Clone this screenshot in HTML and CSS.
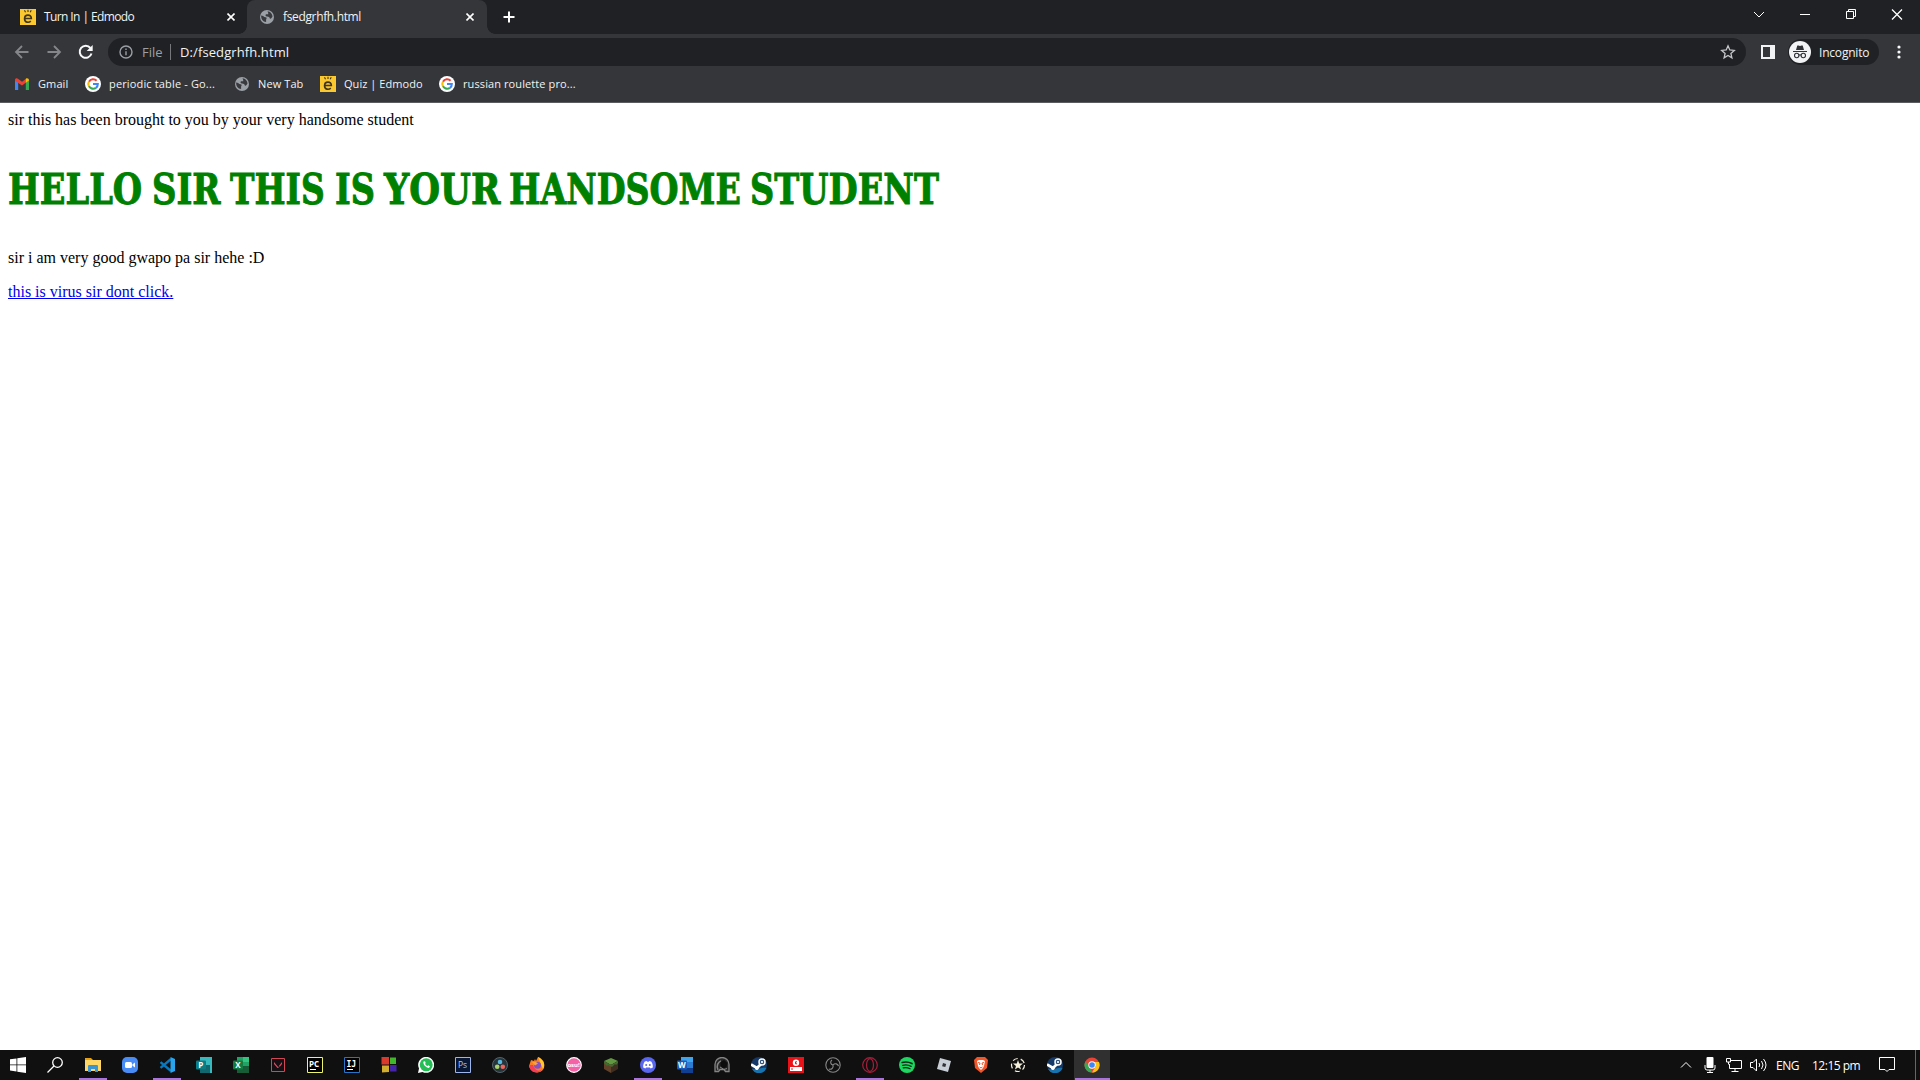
FILE: index.html
```html
<!DOCTYPE html>
<html lang="en">
<head>
<meta charset="utf-8">
<title>fsedgrhfh.html</title>
<link rel="stylesheet" href="styles.css">
</head>
<body>
<svg class="defs" aria-hidden="true">
  <symbol id="edmodo" viewBox="0 0 16 16"><path fill="#fbc82f" d="M0 0h16v16H0z"/><path d="M4.800 9.500h6.500c.2-4.500-6.700-4.700-6.700.2 0 4.100 4.200 4.200 6.200 2.500" fill="none" stroke="#40361d" stroke-width="1.700"/><path d="M4.500 1.200l1 2M8 .8v2.300M11.200 1.200l-1 2" stroke="#40361d" stroke-width="1.100"/></symbol>
  <symbol id="globe" viewBox="0 0 16 16"><circle cx="8" cy="8" r="7" fill="#9aa0a6"/><path d="M2.200 6.500c2 .1 2.600 1.600 4.300 1.700 1.500 0 1.300 1.400.6 2.200v2.700C4 12.800 1.800 9.800 2.200 6.500zM8.500 2.300c2.800.2 4.800 2.600 5 5.200-.7.800-1.300 2.600-2.500 2.200-.5-1.500-1.200-2-3-2.100C6.500 7.200 6 6 7 5.200h2.200V3.800z" fill="#393a3e"/></symbol>
  <symbol id="google" viewBox="0 0 16 16"><circle cx="8" cy="8" r="8" fill="#fff"/><g fill="none" stroke-width="2.100"><path d="M4 5.700A4.800 4.800 0 0 1 11.600 4.700" stroke="#ea4335"/><path d="M4 5.500a4.800 4.800 0 0 0 0 5" stroke="#fbbc05"/><path d="M4 10.300a4.800 4.800 0 0 0 7 1.500" stroke="#34a853"/><path d="M8 8h4.800c0 1.500-.6 2.900-1.800 3.800" stroke="#4285f4"/></g></symbol>
  <symbol id="steam" viewBox="0 0 16 16"><circle cx="8" cy="8" r="8" fill="#153a69"/><path d="M1 12a8 8 0 0 0 14.500-1c-4-1-8 2-14.500 1" fill="#1773ad"/><path d="M0 7.500l6 3.500 5-5" fill="none" stroke="#fff" stroke-width="2.800"/><circle cx="11" cy="5" r="3" fill="#153a69" stroke="#fff" stroke-width="1.500"/><circle cx="11" cy="5" r="1.300" fill="#dfe9f2"/><circle cx="5.800" cy="11.300" r="1.800" fill="#fff"/></symbol>
</svg>

<header class="browser">
  <div class="tabstrip">
    <div class="tab">
      <svg class="ico"><use href="#edmodo"/></svg><span class="tab-title t-turn">Turn In | Edmodo</span>
      <svg class="close" viewBox="0 0 8 8"><path d="M.5.500l7 7m0-7l-7 7"/></svg>
    </div>
    <div class="tab active">
      <svg class="ico"><use href="#globe"/></svg><span class="tab-title t-file">fsedgrhfh.html</span>
      <svg class="close" viewBox="0 0 8 8"><path d="M.5.500l7 7m0-7l-7 7"/></svg>
    </div>
    <svg class="plus" viewBox="0 0 12 12"><path d="M6 .5v11M.5 6h11"/></svg>
    <div class="window-controls">
      <svg viewBox="0 0 46 28"><path d="M18 12l5 5 5-5"/></svg>
      <svg viewBox="0 0 46 28"><path d="M18 14.500h10"/></svg>
      <svg viewBox="0 0 46 28"><path d="M18.500 11.500h7v7h-7zM20.500 11v-1.500h7v7H26"/></svg>
      <svg viewBox="0 0 46 28"><path d="M18 9.500l10 10m0-10l-10 10" class="x"/></svg>
    </div>
  </div>

  <div class="toolbar">
    <svg class="nav dim" viewBox="0 0 16 16"><path d="M14.500 8H2m6-6L2 8l6 6"/></svg>
    <svg class="nav dim" viewBox="0 0 16 16"><path d="M1.500 8H14M8 2l6 6-6 6"/></svg>
    <svg class="nav" viewBox="0 0 16 16"><path d="M13.500 9.500A6 6 0 1 1 12.400 4"/><path d="M14.700 1v6h-6z" class="solid"/></svg>
    <div class="omnibox">
      <svg class="info" viewBox="0 0 14 14"><circle cx="7" cy="7" r="6"/><path d="M7 6.300v4M7 3.500v1.600"/></svg>
      <span class="scheme">File</span><span class="url">D:/fsedgrhfh.html</span>
      <svg class="star" viewBox="0 0 16 16"><path d="M8 1.800l1.800 4.200 4.500.4-3.400 3 1 4.500L8 11.500l-3.900 2.400 1-4.500-3.400-3 4.500-.4z"/></svg>
    </div>
    <svg class="panel" viewBox="0 0 14 14"><path fill="#f1f3f4" d="M0 0h14v14H0z"/><path fill="#35363a" d="M2 2h7v10H2z"/></svg>
    <div class="profile">
      <svg viewBox="0 0 22 22"><circle cx="11" cy="11" r="11" fill="#f1f3f4"/><path fill="#303136" d="M7 9l1.300-4.500h1.200l1.500.5 1.500-.5h1.200L15 9zM4 10h14v1H4z"/><g fill="none" stroke="#303136" stroke-width="1.100"><circle cx="7.700" cy="14.500" r="2.200"/><circle cx="14.300" cy="14.500" r="2.200"/><path d="M9.800 14.200q1.200-.8 2.400 0"/></g></svg>
      <span>Incognito</span>
    </div>
    <svg class="dots" viewBox="0 0 4 14"><circle cx="2" cy="2" r="1.600"/><circle cx="2" cy="7" r="1.600"/><circle cx="2" cy="12" r="1.600"/></svg>
  </div>

  <nav class="bookmarks">
    <a class="bm b1"><svg class="ico" viewBox="0 0 16 16"><path fill="#4285f4" d="M1 4l3.200 2v8H1z"/><path fill="#34a853" d="M11.800 6L15 4v10h-3.200z"/><path fill="#ea4335" d="M1 4c0-2 2-2.200 3-1.300l4 3 4-3v3.800L8 9.500 1 4.700z"/><path fill="#fbbc04" d="M11.800 2.800c1.200-1 3.200-.4 3.200 1.700l-3.200 2.300z"/></svg><span>Gmail</span></a>
    <a class="bm b2"><svg class="ico"><use href="#google"/></svg><span>periodic table - Go...</span></a>
    <a class="bm b3"><svg class="ico"><use href="#globe"/></svg><span>New Tab</span></a>
    <a class="bm b4"><svg class="ico"><use href="#edmodo"/></svg><span>Quiz | Edmodo</span></a>
    <a class="bm b5"><svg class="ico"><use href="#google"/></svg><span>russian roulette pro...</span></a>
  </nav>
</header>

<main class="page">
  <p class="first">sir this has been brought to you by your very handsome student</p>
  <h1><span class="w1">HELLO</span> <span class="w2">SIR</span> <span class="w3">THIS</span> <span class="w4">IS</span> <span class="w5">YOUR</span> <span class="w6">HANDSOME</span> <span class="w7">STUDENT</span></h1>
  <p>sir i am very good gwapo pa sir hehe :D</p>
  <p><a class="link" href="#">this is virus sir dont click.</a></p>
</main>

<footer class="taskbar">
  <div class="apps">
    <i><svg viewBox="0 0 16 16"><path fill="#fff" d="M0 2.300l6.500-.9v6.100H0zM7.300 1.300L16 0v7.500H7.300zM0 8.300h6.500v6.100L0 13.600zM7.300 8.300H16V16l-8.700-1.300z"/></svg></i>
    <i><svg viewBox="0 0 16 16"><g fill="none" stroke="#fff" stroke-width="1.300"><circle cx="10.500" cy="5.500" r="4.800"/><path d="M7 9L.5 15.500"/></g></svg></i>
    <i class="open"><svg viewBox="0 0 16 16"><path fill="#e8a012" d="M0 1h6l2 2h-8z"/><path fill="#ffd767" d="M0 3h16v11H0z"/><path fill="#3c94d1" d="M3 15V9q0-1 1-1h8q1 0 1 1v6h-3v-3H6v3z"/></svg></i>
    <i><svg viewBox="0 0 16 16"><rect width="16" height="16" rx="5" fill="#4a8cf5"/><rect x="3" y="5" width="7" height="6" rx="1.500" fill="#fff"/><path fill="#fff" d="M10.500 7.200L13 5.500v5l-2.500-1.700z"/></svg></i>
    <i class="open"><svg viewBox="0 0 16 16"><path d="M12 2L1.500 10.800M1.500 5.200L12 14" stroke="#0879be" stroke-width="2.400"/><path fill="#29a5ee" d="M11.500 0L16 2v12l-4.500 2z"/></svg></i>
    <i><svg viewBox="0 0 16 16"><path fill="#37b9bd" d="M4 0h12v16H4z"/><path fill="#12676e" d="M4 8h10v8H4z"/><rect y="3.500" width="10" height="9" rx="1" fill="#0b7d83"/><text x="2.200" y="11" class="glyph">P</text></svg></i>
    <i><svg viewBox="0 0 16 16"><path fill="#21a366" d="M4 0h12v16H4z"/><path fill="#33c481" d="M10 0h6v5h-6z"/><path fill="#185c37" d="M4 9h12v7H4z"/><rect y="3.500" width="10" height="9" rx="1" fill="#107c41"/><text x="2.200" y="11" class="glyph">X</text></svg></i>
    <i><svg viewBox="0 0 16 16"><path d="M1.500 1.500h13v13h-13z" fill="#151013" stroke="#d24757"/><path d="M4 5v2l3.500 4h1.500zM12 5v2l-2 2.500H8.500z" fill="#e54b5e"/></svg></i>
    <i><svg viewBox="0 0 16 16"><path d="M.5.500h15v15H.5z" fill="#000" stroke="#edf36b"/><text x="2" y="9.500" class="glyph jb">PC</text><path d="M3 12.500h6" stroke="#fff"/></svg></i>
    <i><svg viewBox="0 0 16 16"><path d="M.5.500h15v15H.5z" fill="#000" stroke="#2875c7"/><text x="2.500" y="9.500" class="glyph ij">IJ</text><path d="M3 12.500h6" stroke="#fff"/></svg></i>
    <i><svg viewBox="0 0 16 16"><path fill="#d93a2b" d="M.5 0H8v7.500H.5z"/><path fill="#41b72d" d="M9 .5h6V7H9z"/><path fill="#d2ae30" d="M1 8.500h7V15l-7 .5z"/><path fill="#4424a9" d="M9 8h6.500v6.500H9z"/></svg></i>
    <i><svg viewBox="0 0 16 16"><path fill="#fff" d="M0 16l1-4.500A8 8 0 1 1 4.500 15z"/><circle cx="8.200" cy="7.800" r="6.500" fill="#25bd55"/><path d="M5.500 4.500c-1 2.500 2.500 6.500 5.500 6.500l1-1.700-1.800-1-1 .9L7 7l.7-1-.7-1.700z" fill="#fff"/></svg></i>
    <i><svg viewBox="0 0 16 16"><path d="M.5.500h15v15H.5z" fill="#071735" stroke="#9eb5ec"/><text x="3" y="11" class="glyph ps">Ps</text></svg></i>
    <i><svg viewBox="0 0 16 16"><circle cx="8" cy="8" r="7.500" fill="#26343c" stroke="#56646b"/><circle cx="8" cy="5" r="2.300" fill="#57b9df"/><circle cx="5.200" cy="9.800" r="2.300" fill="#a9d46b"/><circle cx="10.800" cy="9.800" r="2.300" fill="#ef665c"/></svg></i>
    <i><svg viewBox="0 0 16 16"><path fill="#ff7b24" d="M2 3l3 1 1-2 1 2 2-4 5 4c6 12-11 16-14 5z"/><path fill="#ffc72b" d="M9 0c5 2 8 7 5 12L11 5z"/><path fill="#f43e55" d="M0 8c1 8 9 10 14 4-4 3-8 2-10-4z"/><circle cx="8.500" cy="8.200" r="3.500" fill="#8551c7"/><path fill="#ffa12b" d="M3 5h4l2 1.500-3 2z"/></svg></i>
    <i><svg viewBox="0 0 16 16"><circle cx="8" cy="8" r="7.300" fill="#f463a5" stroke="#fff" stroke-width="1.200"/><text x="1.400" y="10.200" class="glyph osu">osu!</text></svg></i>
    <i><svg viewBox="0 0 16 16"><path fill="#639843" d="M1 4l7-3 7 3-7 4z"/><path fill="#624329" d="M1 4l7 4v8l-7-4z"/><path fill="#3f2d20" d="M15 4L8 8v8l7-4z"/><path fill="#416b2f" d="M1 4l7 4 7-4v2l-2 2-1-1-3 3-2-1-2-1-1 1-3-3z"/></svg></i>
    <i class="open"><svg viewBox="0 0 16 16"><circle cx="8" cy="8" r="8" fill="#5966ee"/><path fill="#fff" d="M4.800 4.600l2-.6.5.8h1.400l.5-.8 2 .6c1.200 1.800 1.800 3.600 1.600 5.800l-2.100 1.100-.8-1.100H6.100l-.8 1.100-2.100-1.100c-.2-2.200.4-4 1.600-5.800z"/><circle cx="6.200" cy="8" r="1" fill="#5966ee"/><circle cx="9.800" cy="8" r="1" fill="#5966ee"/></svg></i>
    <i><svg viewBox="0 0 16 16"><path fill="#41a5ee" d="M4 0h12v5H4z"/><path fill="#2b7cd3" d="M4 5h12v6H4z"/><path fill="#103f91" d="M4 11h12v5H4z"/><rect y="3.500" width="10" height="9" rx="1" fill="#185abd"/><text x="1" y="11" class="glyph">W</text></svg></i>
    <i><svg viewBox="0 0 16 16"><path d="M1 14.500V7.500a7 7 0 0 1 14 0v7h-3.500l-1.500-2H6l-1.500 2z" fill="#252525" stroke="#858585" stroke-width="1.300"/><path d="M4 13c-2-4 0-8 3-9" fill="none" stroke="#858585" stroke-width="1.500"/><path d="M6.500 5l3.500-2 3.500 3-1 4-3 1.500-3-2.500z" fill="#0c0c0c"/><path d="M6 10l4 2.500 3-1" fill="none" stroke="#858585"/></svg></i>
    <i><svg viewBox="0 0 16 16"><use href="#steam"/></svg></i>
    <i><svg viewBox="0 0 16 16"><path fill="#e91219" d="M0 0h16v16H0z"/><circle cx="8" cy="5.800" r="3.200" fill="#fff"/><path d="M9 4.800H7.500v2H9" fill="none" stroke="#e91219"/><path fill="#fff" d="M2 10h12v4H2z"/><path stroke="#e91219" d="M3 12h2"/></svg></i>
    <i><svg viewBox="0 0 16 16"><g fill="none" stroke="#888" stroke-width="1.100"><circle cx="8" cy="8" r="7.200"/><path d="M8 8C5.200 7.500 5 4.500 7 3M8 8c2-2.200 5-1.200 5.500 1.200M8 8c.8 3-1.700 5-4.200 4"/></g></svg></i>
    <i class="open"><svg viewBox="0 0 16 16"><g fill="none" stroke="#a51e3b" stroke-width="1.200"><circle cx="8" cy="8" r="7.300"/><ellipse cx="8" cy="8" rx="3.500" ry="6.300"/></g></svg></i>
    <i><svg viewBox="0 0 16 16"><circle cx="8" cy="8" r="8" fill="#1ed760"/><g fill="none" stroke="#102817" stroke-linecap="round"><path stroke-width="1.700" d="M3.200 5.500q5-1.400 9.800 1"/><path stroke-width="1.400" d="M3.800 8.300q4.300-1.200 8.300 1"/><path stroke-width="1.200" d="M4.200 10.900q3.600-.9 6.900.9"/></g></svg></i>
    <i><svg viewBox="0 0 16 16"><path fill="#c8ced5" d="M4 1l11 3-3 11-11-3z"/><path fill="#303136" d="M7 6l3.200.9L9.300 10 6.100 9.200z"/></svg></i>
    <i><svg viewBox="0 0 16 16"><path fill="#f1562b" d="M4 0h8l3 3-1 8-6 5-6-5L1 3z"/><path fill="#fff" d="M4 4l2-1h4l2 1-1 5-1 2-2 2-2-2-1-2z"/><path d="M5 5.500l2 .5-.5 2M11 5.500L9 6l.5 2M6.500 10L8 11l1.500-1" stroke="#f1562b" fill="none"/></svg></i>
    <i><svg viewBox="0 0 16 16"><circle cx="8" cy="8" r="6.500" fill="none" stroke="#f3efdb" stroke-width="1.200" stroke-dasharray="5 3.170"/><path fill="#f3efdb" d="M8 3l1.200 3.600h3.800l-3 2.300 1.100 3.700L8 10.400l-3.100 2.200L6 8.900 3 6.600h3.800z"/></svg></i>
    <i><svg viewBox="0 0 16 16"><use href="#steam"/></svg></i>
    <i class="open current"><svg viewBox="0 0 16 16"><circle cx="8" cy="8" r="7.500" fill="#e84436"/><path fill="#35a853" d="M1.500 4.300L6 11l2.500 4.500A7.500 7.500 0 0 1 1.500 4.300z"/><path fill="#fbc116" d="M8 5h7a7.500 7.500 0 0 1-7 10.500l3.500-6z"/><circle cx="8" cy="8" r="3.700" fill="#fff"/><circle cx="8" cy="8" r="2.800" fill="#4285f4"/></svg></i>
  </div>
  <div class="tray">
    <svg class="chev" viewBox="0 0 12 8"><path d="M1 6.500l5-5 5 5"/></svg>
    <svg class="mic" viewBox="0 0 12 16"><rect x="2.500" width="7" height="11" rx="1" fill="#fff" stroke="none"/><path d="M1 8v3q0 2 2 2h6q2 0 2-2V8M6 13v2M3 15.500h6"/></svg>
    <svg class="net" viewBox="0 0 16 14"><path d="M5 2.500h10.500v8H3.500V6M9 11v2M5.500 13.500h7M.5.500h4v3.500h-4zM2.500 4v2.500"/></svg>
    <svg class="vol" viewBox="0 0 17 14"><path d="M.5 4.500H3l3.500-3.500v12L3 9.500H.5zM9 5q1.500 2 0 4M11.500 3q3 4 0 8M13.500 1q5 6 0 12"/></svg>
    <span class="lang">ENG</span><span class="clock">12:15 pm</span>
    <svg class="note" viewBox="0 0 16 16"><path d="M.5.500h15v12H10L8 14.500 6 12.500H.5z"/></svg>
  </div>
</footer>
</body>
</html>
```
FILE: styles.css
```css
* { box-sizing: border-box; }
body { margin: 0; width: 1920px; height: 1080px; overflow: hidden; display: flex; flex-direction: column; background: #fff; font-family: "Open Sans", "Noto Sans", sans-serif; }
svg { display: block; flex: none; }
.defs { display: none; }
span { white-space: nowrap; }
.browser { height: 103px; flex: none; background: #35363a; border-bottom: 1px solid #5b5c60; color: #f1f3f4; font-size: 12px; }
.ico { width: 16px; height: 16px; }

.tabstrip { height: 34px; display: flex; background: #202124; }
.tab { height: 34px; width: 247px; display: flex; align-items: center; padding: 0 12px 1px 20px; }
.tab.active { position: relative; width: 240px; padding: 0 13px 1px 12px; background: #35363a; border-radius: 8px 8px 0 0; }
.tab.active::before, .tab.active::after { content: ""; position: absolute; bottom: 0; width: 8px; height: 8px; }
.tab.active::before { left: -8px; background: radial-gradient(circle at 0 0, #202124 7.5px, #35363a 8px); }
.tab.active::after { right: -8px; background: radial-gradient(circle at 100% 0, #202124 7.5px, #35363a 8px); }
.tab-title { margin-left: 8px; }
.t-turn { letter-spacing: -.6px; }
.t-file { letter-spacing: -.35px; }
.tab .close { width: 8px; height: 8px; margin-left: auto; }
.close path, .plus path { fill: none; stroke: #fff; stroke-width: 1.6; }
.plus { width: 12px; height: 12px; margin: 11px 0 0 16px; }
.plus path { stroke-width: 2; }
.window-controls { margin-left: auto; display: flex; }
.window-controls svg { width: 46px; height: 28px; }
.window-controls path { fill: none; stroke: #fff; stroke-width: 1; }
.window-controls .x { stroke-width: 1.3; }

.toolbar { height: 36px; display: flex; align-items: center; padding: 0 19px 0 14px; }
.nav { width: 16px; height: 16px; margin-right: 16px; fill: none; stroke: #f8f9fa; stroke-width: 2; }
.nav .solid { fill: #f8f9fa; stroke: none; }
.nav.dim { stroke: #85868a; stroke-width: 1.8; }
.omnibox { width: 1638px; height: 28px; margin-left: -2px; border-radius: 14px; background: #202124; display: flex; align-items: center; padding: 0 10px 0 11px; font-size: 13px; }
.info { width: 14px; height: 14px; fill: none; stroke: #9aa0a6; stroke-width: 1.4; }
.scheme { width: 29px; margin-left: 9px; color: #9aa0a6; border-right: 1px solid #75777b; height: 16px; line-height: 16px; }
.url { margin-left: 9px; line-height: 16px; letter-spacing: .1px; }
.star { width: 16px; height: 16px; margin-left: auto; fill: none; stroke: #c4c6c9; stroke-width: 1.3; }
.panel { width: 14px; height: 14px; margin-left: 15px; }
.profile { width: 91px; height: 26px; margin-left: 13px; border-radius: 13px; background: #202124; display: flex; align-items: center; gap: 8px; padding-left: 1px; letter-spacing: -.2px; }
.profile svg { width: 22px; height: 22px; }
.dots { width: 4px; height: 14px; margin-left: auto; fill: #f8f9fa; }

.bookmarks { height: 27px; display: flex; align-items: center; padding-left: 14px; font-size: 11px; letter-spacing: .1px; }
.bm { display: flex; align-items: center; gap: 8px; }
.b1 { width: 71px; }
.b2 { width: 149px; letter-spacing: .15px; }
.b3 { width: 86px; }
.b4 { width: 119px; letter-spacing: .05px; }

.page { flex: 1; padding: 8px; font: 16px/18px "Liberation Serif", serif; color: #000; }
.page p { margin: 0 0 16px; }
.page h1 { display: grid; grid-template-columns: 144px 78px 105px 49px 125px 241px 189px; margin: 30px 0; font: bold 43px/60px "DejaVu Serif", serif; color: green; -webkit-text-stroke: 1px green; }
.page h1 span { justify-self: start; transform-origin: 0 50%; }
.w1 { transform: scaleX(.783); }
.w2 { transform: scaleX(.789); }
.w3 { transform: scaleX(.765); }
.w4 { transform: scaleX(.78); }
.w5 { transform: scaleX(.823); }
.w6 { transform: scaleX(.774); }
.w7 { transform: scaleX(.781); }
.link { color: #0000ee; text-decoration: underline; }

.taskbar { height: 30px; flex: none; display: flex; justify-content: space-between; background: #101010; color: #fff; font-size: 12px; }
.apps { display: flex; }
.apps i { width: 37px; height: 30px; padding: 7px 0 0 11px; font-style: normal; background: linear-gradient(#a874e0, #a874e0) 5px 28px / 0 2px no-repeat; }
.apps i:first-child, .apps i:nth-child(2) { padding-left: 10px; }
.apps i.open { background-size: 28px 2px; }
.apps i.current { background-color: #303030; background-position: 1px 28px; background-size: 36px 2px; border-left: 1px solid #101010; padding-left: 10px; }
.apps svg { width: 16px; height: 16px; }
.glyph { font: bold 8px "Open Sans", sans-serif; fill: #fff; }
.jb { font-size: 8px; }
.ij { font: bold 8px "DejaVu Sans Mono", monospace; }
.ps { font-weight: normal; font-size: 8.500px; fill: #a9c6ff; }
.osu { font-size: 6px; }
.tray { display: flex; align-items: center; border-right: 1px solid #666; margin-right: 4px; padding-right: 20px; }
.tray svg { fill: none; stroke: #fff; stroke-width: 1; }
.chev { width: 12px; height: 8px; margin-right: 12px; }
.mic { width: 12px; height: 16px; margin-right: 10px; }
.net { width: 16px; height: 14px; margin-right: 8px; }
.vol { width: 17px; height: 14px; margin-right: 9px; }
.lang { width: 36px; letter-spacing: -.5px; }
.clock { width: 67px; letter-spacing: -.5px; }
.note { width: 16px; height: 16px; }
```
